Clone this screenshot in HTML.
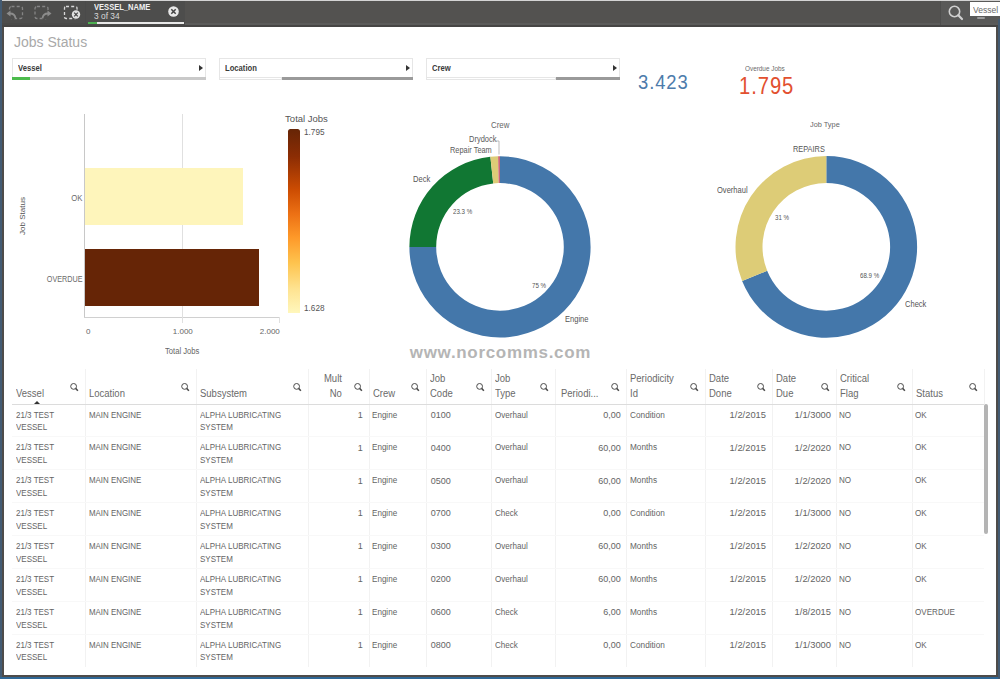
<!DOCTYPE html>
<html><head><meta charset="utf-8"><style>
*{margin:0;padding:0;box-sizing:border-box}
html,body{width:1000px;height:679px;overflow:hidden;background:#435b73;font-family:"Liberation Sans",sans-serif}
.a{position:absolute}
.t{position:absolute;white-space:nowrap;line-height:1}
</style></head><body>
<div class="a" style="left:2px;top:1px;width:996px;height:676px;background:#4e4c4a"></div>
<div class="a" style="left:0;top:677px;width:1000px;height:2px;background:#2f6796"></div>
<div class="a" style="left:2px;top:0;width:998px;height:1px;background:#d4d4d4"></div>
<div class="a" style="left:2px;top:1px;width:998px;height:25px;background:#535250"></div>
<div class="a" style="left:941px;top:1px;width:59px;height:22px;background:#595958"></div>
<div class="a" style="left:185px;top:23px;width:813px;height:2px;background:#5b5b5a"></div>
<div class="a" style="left:2px;top:23px;width:183px;height:2px;background:#4a4a49"></div>
<div class="a" style="left:2px;top:25px;width:996px;height:2px;background:#464544"></div>
<div class="a" style="left:2px;top:1px;width:183px;height:22px;background:#4d4d4c"></div>
<div class="a" style="left:85px;top:1px;width:1px;height:24px;background:#4a4a4a"></div>
<div class="a" style="left:4px;top:27px;width:992px;height:648px;background:#fff"></div>
<svg class="a" style="left:0;top:0" width="90" height="27" viewBox="0 0 90 27"><rect x="9.5" y="6.5" width="13" height="12" rx="2" fill="none" stroke="#858585" stroke-width="1.3" stroke-dasharray="3,2.2"/><rect x="8" y="10" width="7" height="9" fill="#4d4d4c"/><path d="M15.5 18.5 Q15 13.5 10 13.5" fill="none" stroke="#8c8c8c" stroke-width="1.8"/><path d="M6.5 13.5 L10.5 10.5 L10.5 16.5 Z" fill="#8c8c8c"/><rect x="35" y="6.5" width="13" height="12" rx="2" fill="none" stroke="#858585" stroke-width="1.3" stroke-dasharray="3,2.2"/><rect x="42" y="10" width="8" height="9" fill="#4d4d4c"/><path d="M42.5 18.5 Q43 13.5 48 13.5" fill="none" stroke="#8c8c8c" stroke-width="1.8"/><path d="M51.5 13.5 L47.5 10.5 L47.5 16.5 Z" fill="#8c8c8c"/><rect x="64.5" y="6.5" width="12.5" height="12" rx="1.5" fill="none" stroke="#d8d8d8" stroke-width="1.3" stroke-dasharray="3,2.2"/><circle cx="76" cy="14.5" r="4.8" fill="#4d4d4c"/><circle cx="76" cy="14.5" r="4.2" fill="#e0e0e0"/><path d="M74.2 12.7 L77.8 16.3 M77.8 12.7 L74.2 16.3" stroke="#444" stroke-width="1.2"/></svg>
<div class="t" style="top:3.14px;font-size:9px;color:#f0f0f0;left:93.5px;transform:scaleX(0.84);transform-origin:left top;font-weight:bold;">VESSEL_NAME</div>
<div class="t" style="top:11.64px;font-size:9px;color:#d8d8d8;left:93.5px;transform:scaleX(0.93);transform-origin:left top;">3 of 34</div>
<svg class="a" style="left:167px;top:5px" width="13" height="13" viewBox="0 0 13 13"><circle cx="6.5" cy="6.5" r="5.3" fill="#e8e8e8"/><path d="M4.3 4.3 L8.7 8.7 M8.7 4.3 L4.3 8.7" stroke="#444" stroke-width="1.5"/></svg>
<div class="a" style="left:88px;top:22px;width:96px;height:2px;background:#e8e8e8"></div>
<div class="a" style="left:88px;top:22px;width:9px;height:2px;background:#4caf50"></div>
<div class="a" style="left:940px;top:1px;width:1px;height:24px;background:#4e4e4d"></div>
<svg class="a" style="left:946px;top:3px" width="20" height="20" viewBox="0 0 20 20"><circle cx="8.5" cy="8.5" r="5.2" fill="none" stroke="#d0d0d0" stroke-width="1.6"/><path d="M12.3 12.3 L16 16" stroke="#d0d0d0" stroke-width="2.2" stroke-linecap="round"/></svg>
<div class="a" style="left:970px;top:2px;width:30px;height:14px;background:#fff"></div>
<div class="t" style="top:4.57px;font-size:9.5px;color:#6a6a6a;left:972.8px;transform:scaleX(0.9);transform-origin:left top;">Vessel</div>
<div class="a" style="left:998px;top:19px;width:2px;height:660px;background:#435b73"></div>
<div class="a" style="left:977px;top:17px;width:8px;height:2px;background:#9a9a9a;border-radius:1px"></div>
<div class="t" style="top:35.14px;font-size:14px;color:#a9a9a9;left:14px;">Jobs Status</div>
<div class="a" style="left:12px;top:58px;width:194px;height:19px;border:1px solid #e6e6e6;border-bottom:none;background:#fff"></div>
<div class="a" style="left:199px;top:64.5px;width:0;height:0;border-left:4.5px solid #333;border-top:3px solid transparent;border-bottom:3px solid transparent"></div>
<div class="a" style="left:12px;top:77px;width:194px;height:3px;background:#c9c9c9"></div>
<div class="a" style="left:12px;top:77px;width:18px;height:3px;background:#4cbb4c"></div>
<div class="a" style="left:219px;top:58px;width:194px;height:19px;border:1px solid #e6e6e6;border-bottom:none;background:#fff"></div>
<div class="a" style="left:406px;top:64.5px;width:0;height:0;border-left:4.5px solid #333;border-top:3px solid transparent;border-bottom:3px solid transparent"></div>
<div class="a" style="left:219px;top:77px;width:194px;height:3px;background:#9a9a9a"></div>
<div class="a" style="left:219px;top:77px;width:63px;height:3px;background:#fff;border:1px solid #e6e6e6"></div>
<div class="a" style="left:426px;top:58px;width:194px;height:19px;border:1px solid #e6e6e6;border-bottom:none;background:#fff"></div>
<div class="a" style="left:613px;top:64.5px;width:0;height:0;border-left:4.5px solid #333;border-top:3px solid transparent;border-bottom:3px solid transparent"></div>
<div class="a" style="left:426px;top:77px;width:194px;height:3px;background:#9a9a9a"></div>
<div class="a" style="left:426px;top:77px;width:130px;height:3px;background:#fff;border:1px solid #e6e6e6"></div>
<div class="t" style="top:63.51px;font-size:8.5px;color:#3a3a3a;left:18px;transform:scaleX(0.9);transform-origin:left top;font-weight:bold;">Vessel</div>
<div class="t" style="top:63.51px;font-size:8.5px;color:#3a3a3a;left:225px;transform:scaleX(0.9);transform-origin:left top;font-weight:bold;">Location</div>
<div class="t" style="top:63.51px;font-size:8.5px;color:#3a3a3a;left:432px;transform:scaleX(0.9);transform-origin:left top;font-weight:bold;">Crew</div>
<div class="t" style="top:71.90px;font-size:20px;color:#4d7bab;left:638px;transform:scaleX(0.92);transform-origin:left top;letter-spacing:1px;">3.423</div>
<div class="t" style="top:64.92px;font-size:7px;color:#6a6a6a;left:745px;transform:scaleX(0.91);transform-origin:left top;">Overdue Jobs</div>
<div class="t" style="top:75.01px;font-size:23.5px;color:#e2502f;left:738.7px;transform:scaleX(0.86);transform-origin:left top;letter-spacing:1.1px;">1.795</div>
<div class="a" style="left:84px;top:114px;width:1px;height:204px;background:#c8c8c8"></div>
<div class="a" style="left:84px;top:317px;width:196px;height:1px;background:#d0d0d0"></div>
<div class="a" style="left:182px;top:114px;width:1px;height:209px;background:#e0e0e0"></div>
<div class="a" style="left:279px;top:317px;width:1px;height:6px;background:#e0e0e0"></div>
<div class="a" style="left:85px;top:168px;width:158px;height:57px;background:#fef5bb"></div>
<div class="a" style="left:85px;top:249px;width:174px;height:57px;background:#662506"></div>
<div class="t" style="top:193.60px;font-size:8.6px;color:#6a6a6a;right:917.7px;transform:scaleX(0.9);transform-origin:right top;">OK</div>
<div class="t" style="top:274.50px;font-size:8.6px;color:#6a6a6a;right:917.7px;transform:scaleX(0.84);transform-origin:right top;">OVERDUE</div>
<div class="t" style="left:4px;top:212px;width:38px;text-align:center;font-size:8px;color:#555;transform:rotate(-90deg)">Job Status</div>
<div class="t" style="top:327.58px;font-size:8px;color:#666;left:86px;">0</div>
<div class="t" style="top:327.58px;font-size:8px;color:#666;left:172.8px;">1.000</div>
<div class="t" style="top:327.58px;font-size:8px;color:#666;left:259.8px;">2.000</div>
<div class="t" style="top:346.51px;font-size:8.5px;color:#666;left:164.8px;transform:scaleX(0.9);transform-origin:left top;">Total Jobs</div>
<div class="t" style="top:113.97px;font-size:9.5px;color:#555;left:285.1px;">Total Jobs</div>
<div class="a" style="left:288px;top:128.5px;width:12px;height:184px;border-radius:2.5px 2.5px 0 0;background:linear-gradient(to bottom,#662506 0%,#8c2d04 15%,#cc4c02 33%,#ec7014 46%,#fe9929 59%,#fec44f 73%,#fee391 87%,#fff7bc 100%)"></div>
<div class="t" style="top:129.15px;font-size:8.2px;color:#555;left:304px;">1.795</div>
<div class="t" style="top:304.55px;font-size:8.2px;color:#555;left:304px;">1.628</div>
<svg class="a" style="left:0;top:0" width="1000" height="679" viewBox="0 0 1000 679"><path d="M500.00,156.30 A90.6,90.6 0 1 1 409.40,246.90 L436.20,246.90 A63.8,63.8 0 1 0 500.00,183.10 Z" fill="#4477aa"/><path d="M409.40,246.90 A90.6,90.6 0 0 1 490.37,156.81 L493.22,183.46 A63.8,63.8 0 0 0 436.20,246.90 Z" fill="#117733"/><path d="M490.37,156.81 A90.6,90.6 0 0 1 498.10,156.32 L498.66,183.11 A63.8,63.8 0 0 0 493.22,183.46 Z" fill="#ddcc77"/><path d="M498.10,156.32 A90.6,90.6 0 0 1 500.00,156.30 L500.00,183.10 A63.8,63.8 0 0 0 498.66,183.11 Z" fill="#cc6677"/><path d="M496 141 L499 141 L499 154.5" fill="none" stroke="#aaa" stroke-width="0.8"/><path d="M826.30,156.10 A90.8,90.8 0 1 1 742.11,280.91 L767.15,270.80 A63.8,63.8 0 1 0 826.30,183.10 Z" fill="#4477aa"/><path d="M742.11,280.91 A90.8,90.8 0 0 1 826.30,156.10 L826.30,183.10 A63.8,63.8 0 0 0 767.15,270.80 Z" fill="#ddcc77"/></svg>
<div class="t" style="top:120.84px;font-size:8.3px;color:#666;left:491px;transform:scaleX(0.95);transform-origin:left top;">Crew</div>
<div class="t" style="top:134.80px;font-size:8.6px;color:#5a5a5a;left:469.2px;transform:scaleX(0.87);transform-origin:left top;">Drydock</div>
<div class="t" style="top:145.60px;font-size:8.6px;color:#5a5a5a;left:449.8px;transform:scaleX(0.86);transform-origin:left top;">Repair Team</div>
<div class="t" style="top:176.35px;font-size:8.2px;color:#555;left:413px;transform:scaleX(0.92);transform-origin:left top;">Deck</div>
<div class="t" style="top:208.79px;font-size:6.5px;color:#555;left:453px;transform:scaleX(0.95);transform-origin:left top;">23.3 %</div>
<div class="t" style="top:282.79px;font-size:6.5px;color:#555;left:532px;transform:scaleX(0.95);transform-origin:left top;">75 %</div>
<div class="t" style="top:316.35px;font-size:8.2px;color:#555;left:565px;transform:scaleX(0.92);transform-origin:left top;">Engine</div>
<div class="t" style="top:120.78px;font-size:8px;color:#666;left:810px;transform:scaleX(0.92);transform-origin:left top;">Job Type</div>
<div class="t" style="top:145.75px;font-size:8.2px;color:#555;left:793px;transform:scaleX(0.9);transform-origin:left top;">REPAIRS</div>
<div class="t" style="top:187.05px;font-size:8.2px;color:#555;left:717px;transform:scaleX(0.92);transform-origin:left top;">Overhaul</div>
<div class="t" style="top:214.79px;font-size:6.5px;color:#555;left:775px;transform:scaleX(0.95);transform-origin:left top;">31 %</div>
<div class="t" style="top:273.49px;font-size:6.5px;color:#555;left:860px;transform:scaleX(0.95);transform-origin:left top;">68.9 %</div>
<div class="t" style="top:300.85px;font-size:8.2px;color:#555;left:905px;transform:scaleX(0.92);transform-origin:left top;">Check</div>
<div class="t" style="top:343.62px;font-size:17px;color:#b5b5b5;left:409.8px;font-weight:bold;letter-spacing:0.68px;">www.norcomms.com</div>
<div class="a" style="left:85px;top:369px;width:1px;height:298px;background:#f2f2f2"></div>
<div class="a" style="left:196px;top:369px;width:1px;height:298px;background:#f2f2f2"></div>
<div class="a" style="left:308px;top:369px;width:1px;height:298px;background:#f2f2f2"></div>
<div class="a" style="left:369px;top:369px;width:1px;height:298px;background:#f2f2f2"></div>
<div class="a" style="left:426px;top:369px;width:1px;height:298px;background:#f2f2f2"></div>
<div class="a" style="left:491px;top:369px;width:1px;height:298px;background:#f2f2f2"></div>
<div class="a" style="left:555px;top:369px;width:1px;height:298px;background:#f2f2f2"></div>
<div class="a" style="left:626px;top:369px;width:1px;height:298px;background:#f2f2f2"></div>
<div class="a" style="left:705px;top:369px;width:1px;height:298px;background:#f2f2f2"></div>
<div class="a" style="left:772px;top:369px;width:1px;height:298px;background:#f2f2f2"></div>
<div class="a" style="left:836px;top:369px;width:1px;height:298px;background:#f2f2f2"></div>
<div class="a" style="left:912px;top:369px;width:1px;height:298px;background:#f2f2f2"></div>
<div class="a" style="left:984px;top:369px;width:1px;height:35px;background:#f2f2f2"></div>
<div class="a" style="left:12px;top:403.5px;width:972px;height:1px;background:#dcdcdc"></div>
<div class="a" style="left:12px;top:436px;width:972px;height:1px;background:#f8f8f8"></div>
<div class="a" style="left:12px;top:469px;width:972px;height:1px;background:#f8f8f8"></div>
<div class="a" style="left:12px;top:502px;width:972px;height:1px;background:#f8f8f8"></div>
<div class="a" style="left:12px;top:535px;width:972px;height:1px;background:#f8f8f8"></div>
<div class="a" style="left:12px;top:568px;width:972px;height:1px;background:#f8f8f8"></div>
<div class="a" style="left:12px;top:601px;width:972px;height:1px;background:#f8f8f8"></div>
<div class="a" style="left:12px;top:634px;width:972px;height:1px;background:#f8f8f8"></div>
<div class="a" style="left:983.8px;top:404px;width:4px;height:130px;background:#b4b4b4;border-radius:2px"></div>
<svg class="a" style="left:69.5px;top:382.5px" width="9" height="9" viewBox="0 0 9 9"><circle cx="3.6" cy="3.4" r="2.9" fill="none" stroke="#4a4a4a" stroke-width="1"/><path d="M5.6 5.4 L7.9 7.7" stroke="#4a4a4a" stroke-width="1.5"/></svg>
<div class="t" style="top:388.90px;font-size:10px;color:#6a6a6a;left:15.5px;transform:scaleX(0.95);transform-origin:left top;">Vessel</div>
<svg class="a" style="left:180.5px;top:382.5px" width="9" height="9" viewBox="0 0 9 9"><circle cx="3.6" cy="3.4" r="2.9" fill="none" stroke="#4a4a4a" stroke-width="1"/><path d="M5.6 5.4 L7.9 7.7" stroke="#4a4a4a" stroke-width="1.5"/></svg>
<div class="t" style="top:388.90px;font-size:10px;color:#6a6a6a;left:88.5px;transform:scaleX(0.95);transform-origin:left top;">Location</div>
<svg class="a" style="left:292.5px;top:382.5px" width="9" height="9" viewBox="0 0 9 9"><circle cx="3.6" cy="3.4" r="2.9" fill="none" stroke="#4a4a4a" stroke-width="1"/><path d="M5.6 5.4 L7.9 7.7" stroke="#4a4a4a" stroke-width="1.5"/></svg>
<div class="t" style="top:388.90px;font-size:10px;color:#6a6a6a;left:199.5px;transform:scaleX(0.95);transform-origin:left top;">Subsystem</div>
<svg class="a" style="left:353.5px;top:382.5px" width="9" height="9" viewBox="0 0 9 9"><circle cx="3.6" cy="3.4" r="2.9" fill="none" stroke="#4a4a4a" stroke-width="1"/><path d="M5.6 5.4 L7.9 7.7" stroke="#4a4a4a" stroke-width="1.5"/></svg>
<div class="t" style="top:374.20px;font-size:10px;color:#6a6a6a;right:658.5px;transform:scaleX(0.95);transform-origin:right top;">Mult</div>
<div class="t" style="top:388.90px;font-size:10px;color:#6a6a6a;right:658.5px;transform:scaleX(0.95);transform-origin:right top;">No</div>
<svg class="a" style="left:410.5px;top:382.5px" width="9" height="9" viewBox="0 0 9 9"><circle cx="3.6" cy="3.4" r="2.9" fill="none" stroke="#4a4a4a" stroke-width="1"/><path d="M5.6 5.4 L7.9 7.7" stroke="#4a4a4a" stroke-width="1.5"/></svg>
<div class="t" style="top:388.90px;font-size:10px;color:#6a6a6a;left:372.5px;transform:scaleX(0.95);transform-origin:left top;">Crew</div>
<svg class="a" style="left:475.5px;top:382.5px" width="9" height="9" viewBox="0 0 9 9"><circle cx="3.6" cy="3.4" r="2.9" fill="none" stroke="#4a4a4a" stroke-width="1"/><path d="M5.6 5.4 L7.9 7.7" stroke="#4a4a4a" stroke-width="1.5"/></svg>
<div class="t" style="top:374.20px;font-size:10px;color:#6a6a6a;left:429.5px;transform:scaleX(0.95);transform-origin:left top;">Job</div>
<div class="t" style="top:388.90px;font-size:10px;color:#6a6a6a;left:429.5px;transform:scaleX(0.95);transform-origin:left top;">Code</div>
<svg class="a" style="left:539.5px;top:382.5px" width="9" height="9" viewBox="0 0 9 9"><circle cx="3.6" cy="3.4" r="2.9" fill="none" stroke="#4a4a4a" stroke-width="1"/><path d="M5.6 5.4 L7.9 7.7" stroke="#4a4a4a" stroke-width="1.5"/></svg>
<div class="t" style="top:374.20px;font-size:10px;color:#6a6a6a;left:494.5px;transform:scaleX(0.95);transform-origin:left top;">Job</div>
<div class="t" style="top:388.90px;font-size:10px;color:#6a6a6a;left:494.5px;transform:scaleX(0.95);transform-origin:left top;">Type</div>
<svg class="a" style="left:610.5px;top:382.5px" width="9" height="9" viewBox="0 0 9 9"><circle cx="3.6" cy="3.4" r="2.9" fill="none" stroke="#4a4a4a" stroke-width="1"/><path d="M5.6 5.4 L7.9 7.7" stroke="#4a4a4a" stroke-width="1.5"/></svg>
<div class="t" style="top:388.90px;font-size:10px;color:#6a6a6a;right:401.5px;transform:scaleX(0.95);transform-origin:right top;">Periodi...</div>
<svg class="a" style="left:689.5px;top:382.5px" width="9" height="9" viewBox="0 0 9 9"><circle cx="3.6" cy="3.4" r="2.9" fill="none" stroke="#4a4a4a" stroke-width="1"/><path d="M5.6 5.4 L7.9 7.7" stroke="#4a4a4a" stroke-width="1.5"/></svg>
<div class="t" style="top:374.20px;font-size:10px;color:#6a6a6a;left:629.5px;transform:scaleX(0.95);transform-origin:left top;">Periodicity</div>
<div class="t" style="top:388.90px;font-size:10px;color:#6a6a6a;left:629.5px;transform:scaleX(0.95);transform-origin:left top;">Id</div>
<svg class="a" style="left:756.5px;top:382.5px" width="9" height="9" viewBox="0 0 9 9"><circle cx="3.6" cy="3.4" r="2.9" fill="none" stroke="#4a4a4a" stroke-width="1"/><path d="M5.6 5.4 L7.9 7.7" stroke="#4a4a4a" stroke-width="1.5"/></svg>
<div class="t" style="top:374.20px;font-size:10px;color:#6a6a6a;left:708.5px;transform:scaleX(0.95);transform-origin:left top;">Date</div>
<div class="t" style="top:388.90px;font-size:10px;color:#6a6a6a;left:708.5px;transform:scaleX(0.95);transform-origin:left top;">Done</div>
<svg class="a" style="left:820.5px;top:382.5px" width="9" height="9" viewBox="0 0 9 9"><circle cx="3.6" cy="3.4" r="2.9" fill="none" stroke="#4a4a4a" stroke-width="1"/><path d="M5.6 5.4 L7.9 7.7" stroke="#4a4a4a" stroke-width="1.5"/></svg>
<div class="t" style="top:374.20px;font-size:10px;color:#6a6a6a;left:775.5px;transform:scaleX(0.95);transform-origin:left top;">Date</div>
<div class="t" style="top:388.90px;font-size:10px;color:#6a6a6a;left:775.5px;transform:scaleX(0.95);transform-origin:left top;">Due</div>
<svg class="a" style="left:896.5px;top:382.5px" width="9" height="9" viewBox="0 0 9 9"><circle cx="3.6" cy="3.4" r="2.9" fill="none" stroke="#4a4a4a" stroke-width="1"/><path d="M5.6 5.4 L7.9 7.7" stroke="#4a4a4a" stroke-width="1.5"/></svg>
<div class="t" style="top:374.20px;font-size:10px;color:#6a6a6a;left:839.5px;transform:scaleX(0.95);transform-origin:left top;">Critical</div>
<div class="t" style="top:388.90px;font-size:10px;color:#6a6a6a;left:839.5px;transform:scaleX(0.95);transform-origin:left top;">Flag</div>
<svg class="a" style="left:968.5px;top:382.5px" width="9" height="9" viewBox="0 0 9 9"><circle cx="3.6" cy="3.4" r="2.9" fill="none" stroke="#4a4a4a" stroke-width="1"/><path d="M5.6 5.4 L7.9 7.7" stroke="#4a4a4a" stroke-width="1.5"/></svg>
<div class="t" style="top:388.90px;font-size:10px;color:#6a6a6a;left:915.5px;transform:scaleX(0.95);transform-origin:left top;">Status</div>
<div class="a" style="left:34px;top:401px;width:0;height:0;border-left:3px solid transparent;border-right:3px solid transparent;border-bottom:3px solid #333"></div>
<div class="t" style="top:410.51px;font-size:8.5px;color:#646464;left:15.6px;transform:scaleX(0.94);transform-origin:left top;">21/3 TEST</div>
<div class="t" style="top:423.31px;font-size:8.5px;color:#646464;left:15.6px;transform:scaleX(0.94);transform-origin:left top;">VESSEL</div>
<div class="t" style="top:410.51px;font-size:8.5px;color:#646464;left:88.8px;transform:scaleX(0.93);transform-origin:left top;">MAIN ENGINE</div>
<div class="t" style="top:410.51px;font-size:8.5px;color:#646464;left:199.7px;transform:scaleX(0.94);transform-origin:left top;">ALPHA LUBRICATING</div>
<div class="t" style="top:423.31px;font-size:8.5px;color:#646464;left:199.7px;transform:scaleX(0.94);transform-origin:left top;">SYSTEM</div>
<div class="t" style="top:410.74px;font-size:9px;color:#646464;right:637.3px;">1</div>
<div class="t" style="top:410.51px;font-size:8.5px;color:#646464;left:372.2px;transform:scaleX(0.95);transform-origin:left top;">Engine</div>
<div class="t" style="top:410.74px;font-size:9px;color:#646464;left:430.8px;">0100</div>
<div class="t" style="top:410.51px;font-size:8.5px;color:#646464;left:494.5px;transform:scaleX(0.95);transform-origin:left top;">Overhaul</div>
<div class="t" style="top:410.74px;font-size:9px;color:#646464;right:379.20000000000005px;">0,00</div>
<div class="t" style="top:410.51px;font-size:8.5px;color:#646464;left:629.9px;transform:scaleX(0.97);transform-origin:left top;">Condition</div>
<div class="t" style="top:410.74px;font-size:9px;color:#646464;right:233.70000000000005px;transform:scaleX(1.04);transform-origin:right top;">1/2/2015</div>
<div class="t" style="top:410.74px;font-size:9px;color:#646464;right:169.20000000000005px;transform:scaleX(1.04);transform-origin:right top;">1/1/3000</div>
<div class="t" style="top:410.51px;font-size:8.5px;color:#646464;left:839px;transform:scaleX(0.95);transform-origin:left top;">NO</div>
<div class="t" style="top:410.51px;font-size:8.5px;color:#646464;left:915px;transform:scaleX(0.95);transform-origin:left top;">OK</div>
<div class="t" style="top:443.39px;font-size:8.5px;color:#646464;left:15.6px;transform:scaleX(0.94);transform-origin:left top;">21/3 TEST</div>
<div class="t" style="top:456.19px;font-size:8.5px;color:#646464;left:15.6px;transform:scaleX(0.94);transform-origin:left top;">VESSEL</div>
<div class="t" style="top:443.39px;font-size:8.5px;color:#646464;left:88.8px;transform:scaleX(0.93);transform-origin:left top;">MAIN ENGINE</div>
<div class="t" style="top:443.39px;font-size:8.5px;color:#646464;left:199.7px;transform:scaleX(0.94);transform-origin:left top;">ALPHA LUBRICATING</div>
<div class="t" style="top:456.19px;font-size:8.5px;color:#646464;left:199.7px;transform:scaleX(0.94);transform-origin:left top;">SYSTEM</div>
<div class="t" style="top:443.62px;font-size:9px;color:#646464;right:637.3px;">1</div>
<div class="t" style="top:443.39px;font-size:8.5px;color:#646464;left:372.2px;transform:scaleX(0.95);transform-origin:left top;">Engine</div>
<div class="t" style="top:443.62px;font-size:9px;color:#646464;left:430.8px;">0400</div>
<div class="t" style="top:443.39px;font-size:8.5px;color:#646464;left:494.5px;transform:scaleX(0.95);transform-origin:left top;">Overhaul</div>
<div class="t" style="top:443.62px;font-size:9px;color:#646464;right:379.20000000000005px;">60,00</div>
<div class="t" style="top:443.39px;font-size:8.5px;color:#646464;left:629.9px;transform:scaleX(0.97);transform-origin:left top;">Months</div>
<div class="t" style="top:443.62px;font-size:9px;color:#646464;right:233.70000000000005px;transform:scaleX(1.04);transform-origin:right top;">1/2/2015</div>
<div class="t" style="top:443.62px;font-size:9px;color:#646464;right:169.20000000000005px;transform:scaleX(1.04);transform-origin:right top;">1/2/2020</div>
<div class="t" style="top:443.39px;font-size:8.5px;color:#646464;left:839px;transform:scaleX(0.95);transform-origin:left top;">NO</div>
<div class="t" style="top:443.39px;font-size:8.5px;color:#646464;left:915px;transform:scaleX(0.95);transform-origin:left top;">OK</div>
<div class="t" style="top:476.27px;font-size:8.5px;color:#646464;left:15.6px;transform:scaleX(0.94);transform-origin:left top;">21/3 TEST</div>
<div class="t" style="top:489.07px;font-size:8.5px;color:#646464;left:15.6px;transform:scaleX(0.94);transform-origin:left top;">VESSEL</div>
<div class="t" style="top:476.27px;font-size:8.5px;color:#646464;left:88.8px;transform:scaleX(0.93);transform-origin:left top;">MAIN ENGINE</div>
<div class="t" style="top:476.27px;font-size:8.5px;color:#646464;left:199.7px;transform:scaleX(0.94);transform-origin:left top;">ALPHA LUBRICATING</div>
<div class="t" style="top:489.07px;font-size:8.5px;color:#646464;left:199.7px;transform:scaleX(0.94);transform-origin:left top;">SYSTEM</div>
<div class="t" style="top:476.50px;font-size:9px;color:#646464;right:637.3px;">1</div>
<div class="t" style="top:476.27px;font-size:8.5px;color:#646464;left:372.2px;transform:scaleX(0.95);transform-origin:left top;">Engine</div>
<div class="t" style="top:476.50px;font-size:9px;color:#646464;left:430.8px;">0500</div>
<div class="t" style="top:476.27px;font-size:8.5px;color:#646464;left:494.5px;transform:scaleX(0.95);transform-origin:left top;">Overhaul</div>
<div class="t" style="top:476.50px;font-size:9px;color:#646464;right:379.20000000000005px;">60,00</div>
<div class="t" style="top:476.27px;font-size:8.5px;color:#646464;left:629.9px;transform:scaleX(0.97);transform-origin:left top;">Months</div>
<div class="t" style="top:476.50px;font-size:9px;color:#646464;right:233.70000000000005px;transform:scaleX(1.04);transform-origin:right top;">1/2/2015</div>
<div class="t" style="top:476.50px;font-size:9px;color:#646464;right:169.20000000000005px;transform:scaleX(1.04);transform-origin:right top;">1/2/2020</div>
<div class="t" style="top:476.27px;font-size:8.5px;color:#646464;left:839px;transform:scaleX(0.95);transform-origin:left top;">NO</div>
<div class="t" style="top:476.27px;font-size:8.5px;color:#646464;left:915px;transform:scaleX(0.95);transform-origin:left top;">OK</div>
<div class="t" style="top:509.15px;font-size:8.5px;color:#646464;left:15.6px;transform:scaleX(0.94);transform-origin:left top;">21/3 TEST</div>
<div class="t" style="top:521.95px;font-size:8.5px;color:#646464;left:15.6px;transform:scaleX(0.94);transform-origin:left top;">VESSEL</div>
<div class="t" style="top:509.15px;font-size:8.5px;color:#646464;left:88.8px;transform:scaleX(0.93);transform-origin:left top;">MAIN ENGINE</div>
<div class="t" style="top:509.15px;font-size:8.5px;color:#646464;left:199.7px;transform:scaleX(0.94);transform-origin:left top;">ALPHA LUBRICATING</div>
<div class="t" style="top:521.95px;font-size:8.5px;color:#646464;left:199.7px;transform:scaleX(0.94);transform-origin:left top;">SYSTEM</div>
<div class="t" style="top:509.38px;font-size:9px;color:#646464;right:637.3px;">1</div>
<div class="t" style="top:509.15px;font-size:8.5px;color:#646464;left:372.2px;transform:scaleX(0.95);transform-origin:left top;">Engine</div>
<div class="t" style="top:509.38px;font-size:9px;color:#646464;left:430.8px;">0700</div>
<div class="t" style="top:509.15px;font-size:8.5px;color:#646464;left:494.5px;transform:scaleX(0.95);transform-origin:left top;">Check</div>
<div class="t" style="top:509.38px;font-size:9px;color:#646464;right:379.20000000000005px;">0,00</div>
<div class="t" style="top:509.15px;font-size:8.5px;color:#646464;left:629.9px;transform:scaleX(0.97);transform-origin:left top;">Condition</div>
<div class="t" style="top:509.38px;font-size:9px;color:#646464;right:233.70000000000005px;transform:scaleX(1.04);transform-origin:right top;">1/2/2015</div>
<div class="t" style="top:509.38px;font-size:9px;color:#646464;right:169.20000000000005px;transform:scaleX(1.04);transform-origin:right top;">1/1/3000</div>
<div class="t" style="top:509.15px;font-size:8.5px;color:#646464;left:839px;transform:scaleX(0.95);transform-origin:left top;">NO</div>
<div class="t" style="top:509.15px;font-size:8.5px;color:#646464;left:915px;transform:scaleX(0.95);transform-origin:left top;">OK</div>
<div class="t" style="top:542.03px;font-size:8.5px;color:#646464;left:15.6px;transform:scaleX(0.94);transform-origin:left top;">21/3 TEST</div>
<div class="t" style="top:554.83px;font-size:8.5px;color:#646464;left:15.6px;transform:scaleX(0.94);transform-origin:left top;">VESSEL</div>
<div class="t" style="top:542.03px;font-size:8.5px;color:#646464;left:88.8px;transform:scaleX(0.93);transform-origin:left top;">MAIN ENGINE</div>
<div class="t" style="top:542.03px;font-size:8.5px;color:#646464;left:199.7px;transform:scaleX(0.94);transform-origin:left top;">ALPHA LUBRICATING</div>
<div class="t" style="top:554.83px;font-size:8.5px;color:#646464;left:199.7px;transform:scaleX(0.94);transform-origin:left top;">SYSTEM</div>
<div class="t" style="top:542.26px;font-size:9px;color:#646464;right:637.3px;">1</div>
<div class="t" style="top:542.03px;font-size:8.5px;color:#646464;left:372.2px;transform:scaleX(0.95);transform-origin:left top;">Engine</div>
<div class="t" style="top:542.26px;font-size:9px;color:#646464;left:430.8px;">0300</div>
<div class="t" style="top:542.03px;font-size:8.5px;color:#646464;left:494.5px;transform:scaleX(0.95);transform-origin:left top;">Overhaul</div>
<div class="t" style="top:542.26px;font-size:9px;color:#646464;right:379.20000000000005px;">60,00</div>
<div class="t" style="top:542.03px;font-size:8.5px;color:#646464;left:629.9px;transform:scaleX(0.97);transform-origin:left top;">Months</div>
<div class="t" style="top:542.26px;font-size:9px;color:#646464;right:233.70000000000005px;transform:scaleX(1.04);transform-origin:right top;">1/2/2015</div>
<div class="t" style="top:542.26px;font-size:9px;color:#646464;right:169.20000000000005px;transform:scaleX(1.04);transform-origin:right top;">1/2/2020</div>
<div class="t" style="top:542.03px;font-size:8.5px;color:#646464;left:839px;transform:scaleX(0.95);transform-origin:left top;">NO</div>
<div class="t" style="top:542.03px;font-size:8.5px;color:#646464;left:915px;transform:scaleX(0.95);transform-origin:left top;">OK</div>
<div class="t" style="top:574.91px;font-size:8.5px;color:#646464;left:15.6px;transform:scaleX(0.94);transform-origin:left top;">21/3 TEST</div>
<div class="t" style="top:587.71px;font-size:8.5px;color:#646464;left:15.6px;transform:scaleX(0.94);transform-origin:left top;">VESSEL</div>
<div class="t" style="top:574.91px;font-size:8.5px;color:#646464;left:88.8px;transform:scaleX(0.93);transform-origin:left top;">MAIN ENGINE</div>
<div class="t" style="top:574.91px;font-size:8.5px;color:#646464;left:199.7px;transform:scaleX(0.94);transform-origin:left top;">ALPHA LUBRICATING</div>
<div class="t" style="top:587.71px;font-size:8.5px;color:#646464;left:199.7px;transform:scaleX(0.94);transform-origin:left top;">SYSTEM</div>
<div class="t" style="top:575.14px;font-size:9px;color:#646464;right:637.3px;">1</div>
<div class="t" style="top:574.91px;font-size:8.5px;color:#646464;left:372.2px;transform:scaleX(0.95);transform-origin:left top;">Engine</div>
<div class="t" style="top:575.14px;font-size:9px;color:#646464;left:430.8px;">0200</div>
<div class="t" style="top:574.91px;font-size:8.5px;color:#646464;left:494.5px;transform:scaleX(0.95);transform-origin:left top;">Overhaul</div>
<div class="t" style="top:575.14px;font-size:9px;color:#646464;right:379.20000000000005px;">60,00</div>
<div class="t" style="top:574.91px;font-size:8.5px;color:#646464;left:629.9px;transform:scaleX(0.97);transform-origin:left top;">Months</div>
<div class="t" style="top:575.14px;font-size:9px;color:#646464;right:233.70000000000005px;transform:scaleX(1.04);transform-origin:right top;">1/2/2015</div>
<div class="t" style="top:575.14px;font-size:9px;color:#646464;right:169.20000000000005px;transform:scaleX(1.04);transform-origin:right top;">1/2/2020</div>
<div class="t" style="top:574.91px;font-size:8.5px;color:#646464;left:839px;transform:scaleX(0.95);transform-origin:left top;">NO</div>
<div class="t" style="top:574.91px;font-size:8.5px;color:#646464;left:915px;transform:scaleX(0.95);transform-origin:left top;">OK</div>
<div class="t" style="top:607.79px;font-size:8.5px;color:#646464;left:15.6px;transform:scaleX(0.94);transform-origin:left top;">21/3 TEST</div>
<div class="t" style="top:620.59px;font-size:8.5px;color:#646464;left:15.6px;transform:scaleX(0.94);transform-origin:left top;">VESSEL</div>
<div class="t" style="top:607.79px;font-size:8.5px;color:#646464;left:88.8px;transform:scaleX(0.93);transform-origin:left top;">MAIN ENGINE</div>
<div class="t" style="top:607.79px;font-size:8.5px;color:#646464;left:199.7px;transform:scaleX(0.94);transform-origin:left top;">ALPHA LUBRICATING</div>
<div class="t" style="top:620.59px;font-size:8.5px;color:#646464;left:199.7px;transform:scaleX(0.94);transform-origin:left top;">SYSTEM</div>
<div class="t" style="top:608.02px;font-size:9px;color:#646464;right:637.3px;">1</div>
<div class="t" style="top:607.79px;font-size:8.5px;color:#646464;left:372.2px;transform:scaleX(0.95);transform-origin:left top;">Engine</div>
<div class="t" style="top:608.02px;font-size:9px;color:#646464;left:430.8px;">0600</div>
<div class="t" style="top:607.79px;font-size:8.5px;color:#646464;left:494.5px;transform:scaleX(0.95);transform-origin:left top;">Check</div>
<div class="t" style="top:608.02px;font-size:9px;color:#646464;right:379.20000000000005px;">6,00</div>
<div class="t" style="top:607.79px;font-size:8.5px;color:#646464;left:629.9px;transform:scaleX(0.97);transform-origin:left top;">Months</div>
<div class="t" style="top:608.02px;font-size:9px;color:#646464;right:233.70000000000005px;transform:scaleX(1.04);transform-origin:right top;">1/2/2015</div>
<div class="t" style="top:608.02px;font-size:9px;color:#646464;right:169.20000000000005px;transform:scaleX(1.04);transform-origin:right top;">1/8/2015</div>
<div class="t" style="top:607.79px;font-size:8.5px;color:#646464;left:839px;transform:scaleX(0.95);transform-origin:left top;">NO</div>
<div class="t" style="top:607.79px;font-size:8.5px;color:#646464;left:915px;transform:scaleX(0.95);transform-origin:left top;">OVERDUE</div>
<div class="t" style="top:640.67px;font-size:8.5px;color:#646464;left:15.6px;transform:scaleX(0.94);transform-origin:left top;">21/3 TEST</div>
<div class="t" style="top:653.47px;font-size:8.5px;color:#646464;left:15.6px;transform:scaleX(0.94);transform-origin:left top;">VESSEL</div>
<div class="t" style="top:640.67px;font-size:8.5px;color:#646464;left:88.8px;transform:scaleX(0.93);transform-origin:left top;">MAIN ENGINE</div>
<div class="t" style="top:640.67px;font-size:8.5px;color:#646464;left:199.7px;transform:scaleX(0.94);transform-origin:left top;">ALPHA LUBRICATING</div>
<div class="t" style="top:653.47px;font-size:8.5px;color:#646464;left:199.7px;transform:scaleX(0.94);transform-origin:left top;">SYSTEM</div>
<div class="t" style="top:640.90px;font-size:9px;color:#646464;right:637.3px;">1</div>
<div class="t" style="top:640.67px;font-size:8.5px;color:#646464;left:372.2px;transform:scaleX(0.95);transform-origin:left top;">Engine</div>
<div class="t" style="top:640.90px;font-size:9px;color:#646464;left:430.8px;">0800</div>
<div class="t" style="top:640.67px;font-size:8.5px;color:#646464;left:494.5px;transform:scaleX(0.95);transform-origin:left top;">Check</div>
<div class="t" style="top:640.90px;font-size:9px;color:#646464;right:379.20000000000005px;">0,00</div>
<div class="t" style="top:640.67px;font-size:8.5px;color:#646464;left:629.9px;transform:scaleX(0.97);transform-origin:left top;">Condition</div>
<div class="t" style="top:640.90px;font-size:9px;color:#646464;right:233.70000000000005px;transform:scaleX(1.04);transform-origin:right top;">1/2/2015</div>
<div class="t" style="top:640.90px;font-size:9px;color:#646464;right:169.20000000000005px;transform:scaleX(1.04);transform-origin:right top;">1/1/3000</div>
<div class="t" style="top:640.67px;font-size:8.5px;color:#646464;left:839px;transform:scaleX(0.95);transform-origin:left top;">NO</div>
<div class="t" style="top:640.67px;font-size:8.5px;color:#646464;left:915px;transform:scaleX(0.95);transform-origin:left top;">OK</div>
</body></html>
